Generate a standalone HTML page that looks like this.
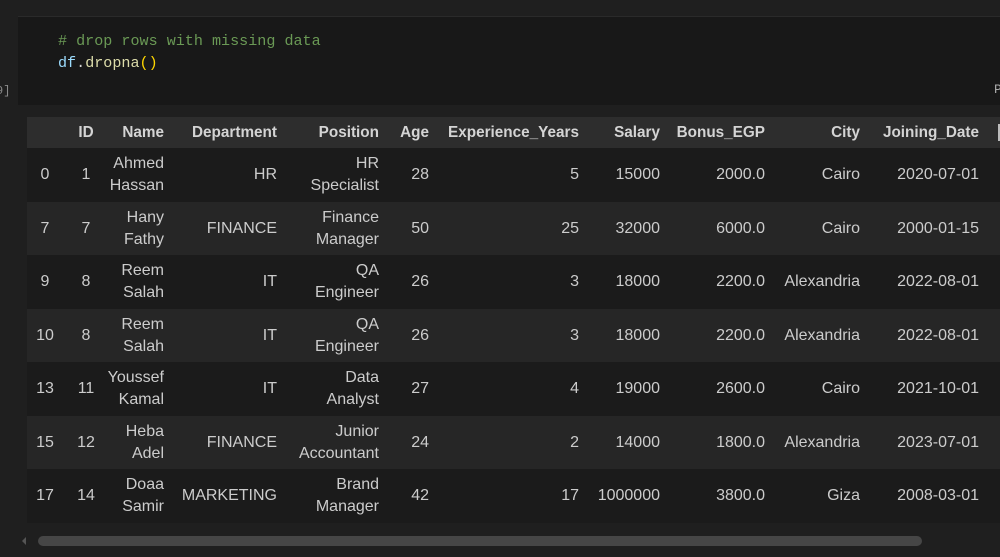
<!DOCTYPE html>
<html><head><style>
body{margin:0;width:1000px;height:557px;background:#1f1f1f;overflow:hidden;position:relative;font-family:"Liberation Sans",sans-serif;color:#cccccc}
.code{position:absolute;left:18px;top:16px;width:990px;height:88px;background:#181818;border-top:1px solid #2a2a2a}
.mono{position:absolute;font-family:"Liberation Mono",monospace;font-size:15.1px;white-space:pre}
.row{position:absolute;left:27px;width:980px;height:54px}
.c{position:absolute;font-size:16px;line-height:22px;white-space:nowrap;text-align:right}
.hdr .c{font-weight:bold;color:#d4d4d4;font-size:15.3px}
</style></head><body>
<div class="code"></div>
<div class="mono" style="left:58px;top:32px;color:#6a9955"># drop rows with missing data</div>
<div class="mono" style="left:58px;top:54px"><span style="color:#9cdcfe">df</span><span style="color:#d4d4d4">.</span><span style="color:#dcdcaa">dropna</span><span style="color:#ffd700">()</span></div>
<div class="mono" style="left:-4px;top:84px;color:#8a8a8a;font-size:12px">9]</div>
<div class="mono" style="left:994px;top:82px;color:#aaa;font-size:13px">P</div>
<div id="t"></div>
<div style="position:absolute;left:38px;top:536px;width:884px;height:10px;border-radius:5px;background:#464646"></div>
<div style="position:absolute;left:22px;top:537px;width:0;height:0;border-top:4px solid transparent;border-bottom:4px solid transparent;border-right:4px solid #555"></div>
<script>
var cols=[[45,'c'],[86,'c'],[164,'r'],[277,'r'],[379,'r'],[429,'r'],[579,'r'],[660,'r'],[765,'r'],[860,'r'],[979,'r']];
var hdr=['','ID','Name','Department','Position','Age','Experience_Years','Salary','Bonus_EGP','City','Joining_Date'];
var rows=[
['0','1','Ahmed<br>Hassan','HR','HR<br>Specialist','28','5','15000','2000.0','Cairo','2020-07-01'],
['7','7','Hany<br>Fathy','FINANCE','Finance<br>Manager','50','25','32000','6000.0','Cairo','2000-01-15'],
['9','8','Reem<br>Salah','IT','QA<br>Engineer','26','3','18000','2200.0','Alexandria','2022-08-01'],
['10','8','Reem<br>Salah','IT','QA<br>Engineer','26','3','18000','2200.0','Alexandria','2022-08-01'],
['13','11','Youssef<br>Kamal','IT','Data<br>Analyst','27','4','19000','2600.0','Cairo','2021-10-01'],
['15','12','Heba<br>Adel','FINANCE','Junior<br>Accountant','24','2','14000','1800.0','Alexandria','2023-07-01'],
['17','14','Doaa<br>Samir','MARKETING','Brand<br>Manager','42','17','1000000','3800.0','Giza','2008-03-01']];
var h='';
function cells(r,cy){var s='';r.forEach(function(v,i){var two=v.indexOf('<br>')>=0;var top=cy-(two?22:11);var x=cols[i][0];
 if(cols[i][1]=='c')s+='<div class="c" style="left:'+(x-20)+'px;width:40px;text-align:center;top:'+top+'px">'+v+'</div>';
 else s+='<div class="c" style="right:'+(1000-x)+'px;top:'+top+'px">'+v+'</div>';});return s;}
h+='<div class="row hdr" style="top:117px;height:31px;background:#2d2d2d"></div><div class="hdr">'+cells(hdr,133)+'</div>';
rows.forEach(function(r,k){var cy=175+k*53.5;h+='<div class="row" style="top:'+(cy-27)+'px;background:'+(k%2?'#262626':'#1b1b1b')+'"></div>'+cells(r,cy);});
h+='<div style="position:absolute;left:998px;top:124px;width:2px;height:17px;background:#bbb"></div>';
document.getElementById('t').innerHTML=h;
</script>
</body></html>
